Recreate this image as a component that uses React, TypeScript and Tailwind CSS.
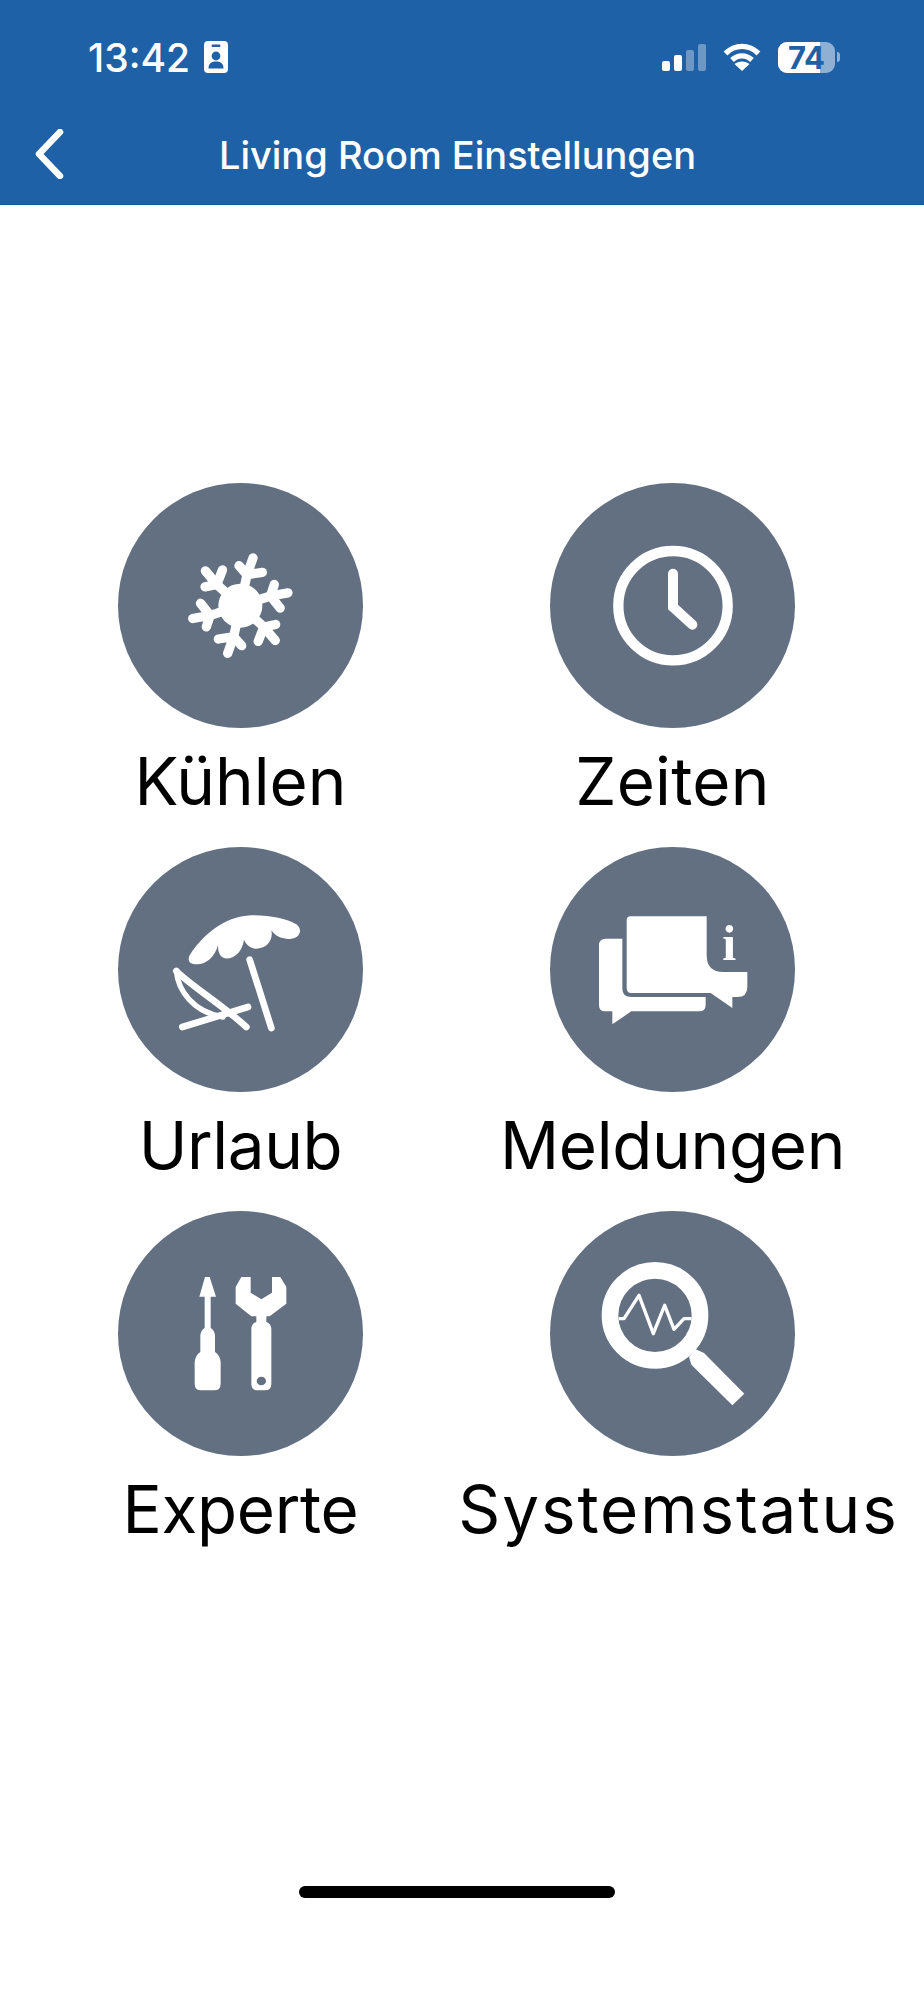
import React from 'react';

const fontStyle = "font-['Inter','Liberation_Sans',sans-serif]";
const SLATE = '#637082';

const Snowflake = () => (
  <svg viewBox="25 10 735 735" className="w-full h-full">
    <circle cx="392" cy="378" r="66" fill="#fff" />
    {[0, 60, 120, 180, 240, 300].map((deg) => (
      <g key={deg} transform={`rotate(${deg} 392 378)`} stroke="#fff" strokeWidth="28" strokeLinecap="round" fill="none">
        <path d="M392 378 L412 285 L430 235" />
        <path d="M388 258 L412 285 L458 278" />
      </g>
    ))}
  </svg>
);

const Clock = () => (
  <svg viewBox="28 10 735 735" className="w-full h-full" fill="none" stroke="#fff">
    <circle cx="397" cy="378" r="164" strokeWidth="31" />
    <path d="M397 282 V382 L455 435" strokeWidth="30" strokeLinecap="round" strokeLinejoin="miter" />
  </svg>
);

const Beach = () => (
  <svg viewBox="25 20 735 735" className="w-full h-full">
    <path
      fill="#fff"
      d="M240 345 C275 290 340 228 425 225 C480 224 530 235 560 252 C582 268 570 298 535 296 C510 294 495 285 485 270 C492 300 470 325 440 325 C425 325 410 315 403 298 C398 335 372 358 345 354 C330 350 325 335 325 315 C315 350 290 372 262 372 C240 372 232 360 240 345 Z"
    />
    <g fill="none" stroke="#fff" strokeLinecap="round">
      <path d="M420 358 L485 563" strokeWidth="20" />
      <path d="M218 560 L415 500" strokeWidth="20" />
      <path d="M200 392 C235 430 340 495 410 560" strokeWidth="20" />
      <path d="M200 392 C205 450 250 515 340 530" strokeWidth="16" />
    </g>
  </svg>
);

const Messages = () => (
  <svg viewBox="28 20 735 735" className="w-full h-full">
    <path
      fill="#fff"
      d="M258 240 Q258 228 270 228 H498 V345 Q498 395 548 395 H620 V440 Q620 470 590 470 H575 V503 L510 458 H272 Q258 458 258 444 Z"
    />
    <path
      fill="#fff"
      d="M245 295 H195 Q175 295 175 315 V495 Q175 513 193 513 H215 V552 L272 513 H475 Q495 513 495 493 V470 H272 Q245 470 245 445 Z"
    />
    <text x="566" y="360" textAnchor="middle" fill="#fff" fontFamily="'Liberation Serif', serif" fontWeight="700" fontSize="150">
      i
    </text>
  </svg>
);

const Tools = () => (
  <svg viewBox="25 17 735 735" className="w-full h-full">
    <path
      fill="#fff"
      d="M286 215 H300 L319 274 H303 V368 Q314 374 316 390 V440 Q331 450 333 470 V535 Q333 555 313 555 H275 Q255 555 255 535 V470 Q257 450 272 440 V390 Q274 374 285 368 V274 H269 Z"
    />
    <path
      fill="#fff"
      d="M395 215 H423 V262 L455 282 L487 262 V215 H512 L530 245 V295 L480 333 H470 V350 Q485 355 485 372 V535 Q485 555 465 555 H445 Q425 555 425 535 V372 Q425 355 440 350 V333 H425 L378 295 V245 Z"
    />
    <ellipse cx="455" cy="527" rx="14" ry="13" fill={SLATE} />
  </svg>
);

const Status = () => (
  <svg viewBox="28 17 735 735" className="w-full h-full">
    <circle cx="343" cy="330" r="135" fill="none" stroke="#fff" strokeWidth="50" />
    <path fill="#fff" d="M445 455 L465 432 L490 443 L611 565 L575 600 L452 478 Z" />
    <path
      d="M235 340 H250 L295 270 L338 385 L372 300 L400 372 L430 340 H452"
      fill="none"
      stroke="#fff"
      strokeWidth="10"
      strokeLinejoin="round"
    />
  </svg>
);

const items = [
  { label: 'Kühlen', icon: <Snowflake />, text: 'tracking-normal' },
  { label: 'Zeiten', icon: <Clock />, text: 'tracking-[0.3px]' },
  { label: 'Urlaub', icon: <Beach />, text: 'tracking-[-0.4px]' },
  { label: 'Meldungen', icon: <Messages />, text: 'tracking-[-0.3px]' },
  { label: 'Experte', icon: <Tools />, text: 'tracking-[-0.3px]' },
  { label: 'Systemstatus', icon: <Status />, text: 'tracking-[1.9px] ml-[12px]' },
];

const StatusBar = () => (
  <div className="flex items-center h-[36px] mt-[39px] pl-[88px] pr-[84px] text-white">
    <span className="text-[39px] leading-none font-medium">13:42</span>
    <svg viewBox="0 0 24 32" className="w-[24px] h-[32px] ml-[14px]">
      <rect width="24" height="32" rx="4" fill="#fff" />
      <rect x="7.5" y="3.5" width="9" height="2.4" rx="1.2" fill="#1f61a6" />
      <circle cx="12" cy="15" r="4.4" fill="#1f61a6" />
      <path d="M4.5 27.5 C4.5 22 8 20.5 12 20.5 C16 20.5 19.5 22 19.5 27.5 Z" fill="#1f61a6" />
    </svg>
    <div className="ml-auto flex items-end gap-[4px] h-[27px]">
      <div className="w-[8px] h-[10px] rounded-[2px] bg-white" />
      <div className="w-[8px] h-[16px] rounded-[2px] bg-white" />
      <div className="w-[8px] h-[21px] rounded-[2px] bg-white/35" />
      <div className="w-[8px] h-[27px] rounded-[2px] bg-white/35" />
    </div>
    <svg viewBox="0 0 38 28" className="w-[38px] h-[28px] ml-[17px]" fill="none" stroke="#fff" strokeWidth="5.4">
      <path d="M2.5 10.5 C12 1 26 1 35.5 10.5" />
      <path d="M9 17 C15 11.5 23 11.5 29 17" />
      <path fill="#fff" stroke="none" d="M19 28 L11.5 21 C15.5 17.6 22.5 17.6 26.5 21 Z" />
    </svg>
    <div className="relative ml-[17px] w-[57px] h-[31px] rounded-[9px] bg-white/50">
      <div className="w-[74%] h-full rounded-l-[9px] bg-white" />
      <span className="absolute inset-0 flex items-center justify-center text-[31px] leading-none font-bold text-[#1f61a6]">
        74
      </span>
    </div>
    <div className="ml-[2px] w-[3px] h-[10px] rounded-r-[3px] bg-white/50" />
  </div>
);

export default function App() {
  return (
    <div className={`flex flex-col w-[924px] h-[2000px] bg-white text-black ${fontStyle}`}>
      <header className="flex flex-col h-[205px] bg-[#1f61a6] border-b border-[#1a558f]">
        <StatusBar />
        <div className="flex items-center h-[50px] mt-[54px]">
          <svg viewBox="0 0 30 50" className="w-[30px] h-[50px] ml-[35px]" fill="none" stroke="#fff" strokeWidth="6.5" strokeLinecap="round" strokeLinejoin="round">
            <path d="M25 3 L4 25 L25 47" />
          </svg>
          <h1 className="flex-1 pr-[74px] pt-[2px] text-center text-[38px] leading-none font-medium text-white">
            Living Room Einstellungen
          </h1>
        </div>
      </header>

      <main className="grid grid-cols-[432px_432px] auto-rows-[364px] pt-[278px] pl-[24.5px]">
        {items.map((item) => (
          <div key={item.label} className="flex flex-col items-center">
            <div className="w-[245px] h-[245px] rounded-full bg-[#637082] shrink-0">{item.icon}</div>
            <span className={`mt-[16px] text-[65.5px] leading-[76px] whitespace-nowrap ${item.text}`}>{item.label}</span>
          </div>
        ))}
      </main>

      <div className="mt-auto mb-[102px] self-start ml-[299px] w-[316px] h-[12px] rounded-full bg-black" />
    </div>
  );
}
